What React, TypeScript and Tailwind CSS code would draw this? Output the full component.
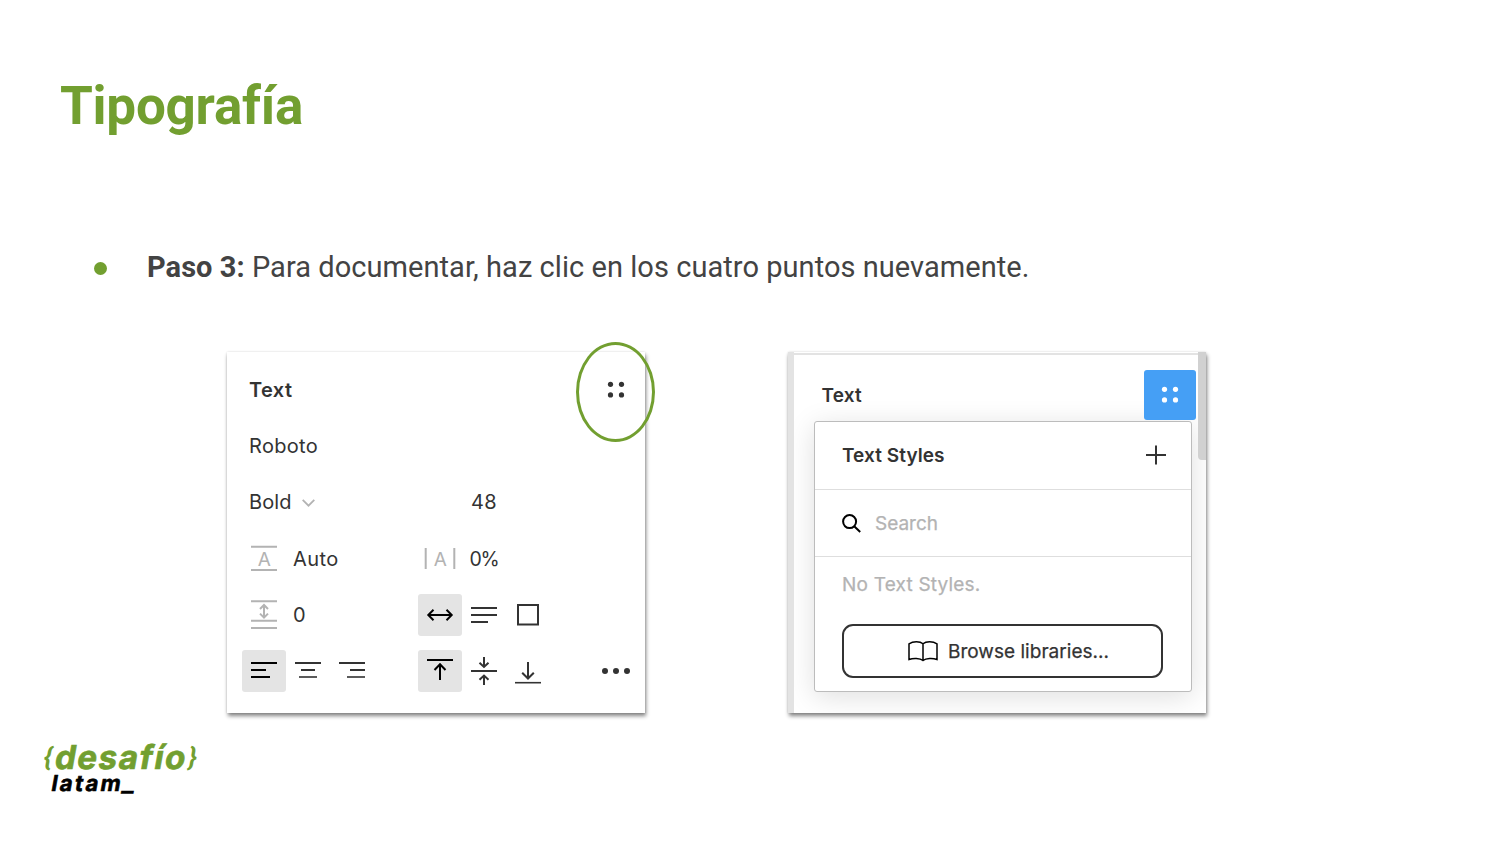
import type { ReactNode } from 'react';

function Glyph({ children, className = '' }: { children: ReactNode; className?: string }) {
  return (
    <svg
      viewBox="-22 -21 44 42"
      className={`h-[42px] w-[44px] shrink-0 ${className}`}
      fill="none"
      stroke="currentColor"
      strokeWidth="2"
    >
      {children}
    </svg>
  );
}

function FourDots({ className = '' }: { className?: string }) {
  return (
    <Glyph className={className}>
      <g fill="currentColor" stroke="none">
        <circle cx="-5.5" cy="-5.7" r="2.6" />
        <circle cx="5.5" cy="-5.7" r="2.6" />
        <circle cx="-5.5" cy="4.9" r="2.6" />
        <circle cx="5.5" cy="4.9" r="2.6" />
      </g>
    </Glyph>
  );
}

const row = 'grid grid-cols-[repeat(9,44px)] items-center';
const selected = 'rounded-[3px] bg-[#e4e4e4] text-black';

function TextPanel() {
  return (
    <section className="relative h-[361px] w-[418px] bg-white pl-[15px] pt-[10px] text-[20px] text-[#333] shadow-[1px_3px_4px_0_rgba(0,0,0,0.48),0_0_2px_rgba(0,0,0,0.12)]">
      <div className="grid grid-rows-[repeat(6,56.2px)] tracking-[0.4px]">
        <div className={row}>
          <h2 className="col-span-8 pl-[7px] font-semibold tracking-[0.4px]">Text</h2>
          <FourDots />
        </div>
        <div className={row}>
          <span className="col-span-9 pl-[7px] tracking-[0.3px]">Roboto</span>
        </div>
        <div className={row}>
          <div className="col-span-5 flex items-center gap-[10px] pl-[7px]">
            <span className="tracking-[0.1px]">Bold</span>
            <svg viewBox="0 0 13 8" className="mt-[2px] h-2 w-[13px] text-[#b3b3b3]" fill="none" stroke="currentColor" strokeWidth="1.8">
              <path d="M.7.9 6.5 6.7 12.3.9" />
            </svg>
          </div>
          <span className="pl-[9px]">48</span>
        </div>
        <div className={row}>
          <Glyph className="text-[#b3b3b3]">
            <path d="M-13-12.3H13M-13 11H13" />
            <text x="0.2" y="6.7" textAnchor="middle" fontSize="19" letterSpacing="0" fill="currentColor" stroke="none">A</text>
          </Glyph>
          <span className="col-span-3 pl-[7px] tracking-[0.4px]">Auto</span>
          <Glyph className="text-[#b3b3b3]">
            <path d="M-14.3-11V10M14.3-11V10" />
            <text x="0.2" y="6.7" textAnchor="middle" fontSize="19" letterSpacing="0" fill="currentColor" stroke="none">A</text>
          </Glyph>
          <span className="pl-[7.5px] pt-px text-[19.5px] tracking-[-1.3px]">0%</span>
        </div>
        <div className={row}>
          <Glyph className="text-[#b3b3b3]">
            <path d="M-13-13.7H13M-13 5.7H13M-13 13H13M0-10V2.6M-4-6 0-10 4-6M-4-1.4 0 2.6 4-1.4" />
          </Glyph>
          <span className="col-span-3 pl-[7px]">0</span>
          <Glyph className={selected}>
            <path d="M-11.5 0H11.5M-6.5-5.2-11.7 0-6.5 5.2M6.5-5.2 11.7 0 6.5 5.2" />
          </Glyph>
          <Glyph>
            <path d="M-13-7H13M-13 0H13M-13 7H4" />
          </Glyph>
          <Glyph>
            <rect x="-10" y="-10" width="20" height="19.5" />
          </Glyph>
        </div>
        <div className={row}>
          <Glyph className={selected}>
            <path d="M-13-8H13M-13-1H2M-13 6H6" />
          </Glyph>
          <Glyph>
            <path d="M-13-8H13M-7-1H7" />
            <path d="M-9 6H9" strokeWidth="1.6" />
          </Glyph>
          <Glyph>
            <path d="M-13-8H13M-2-1H13" />
            <path d="M-5 6H13" strokeWidth="1.6" />
          </Glyph>
          <span />
          <Glyph className={selected}>
            <path d="M-13-11H13M0-6.5V9M-5.5-1 0-6.7 5.5-1" />
          </Glyph>
          <Glyph>
            <path d="M-13 0H13M0-14V-4.5M-4.5-8.2 0-4 4.5-8.2M0 14V5M-4.5 8.7 0 4.5 4.5 8.7" />
          </Glyph>
          <Glyph>
            <path d="M0-9V7M-5.8 1.7 0 7.5 5.8 1.7" />
            <path d="M-13 11.7H13" strokeWidth="1.6" />
          </Glyph>
          <span />
          <Glyph>
            <g fill="currentColor" stroke="none">
              <circle cx="-11" cy="0" r="3" />
              <circle cx="0" cy="0" r="3" />
              <circle cx="11" cy="0" r="3" />
            </g>
          </Glyph>
        </div>
      </div>
      <span className="absolute left-[349px] top-[-10px] h-[100px] w-[79px] rounded-[50%] border-[3px] border-[#729f30]" />
    </section>
  );
}

function StylesPanel() {
  return (
    <section className="relative flex h-[361px] w-[418px] bg-white text-[19px] text-[#333] shadow-[1px_3px_4px_0_rgba(0,0,0,0.48),0_0_2px_rgba(0,0,0,0.12)]">
      <div className="w-[6px] shrink-0 bg-[#e3e3e3]" />
      <div className="flex-1 overflow-hidden pl-5 pt-px">
        <div className="-ml-5 h-[2px] bg-[#e3e3e3]" />
        <header className="mt-[15px] flex h-[50px] items-center justify-between pl-[7.5px]">
          <h2 className="pt-[2px] font-semibold tracking-[0.2px]">Text</h2>
          <div className="mr-[10px] grid h-[50px] w-[52px] place-items-center rounded-[3px] bg-[#459ff5] text-white">
            <FourDots />
          </div>
        </header>
        <div className="mt-px h-[271px] w-[378px] rounded-[3px] border border-[#bcbcbc] bg-white shadow-[0_5px_28px_rgba(0,0,0,0.13)]">
          <div className="flex h-[68px] items-center justify-between border-b border-[#dedede] pl-[27px] pr-[25px]">
            <h3 className="pt-[2px] font-semibold tracking-[0.06px]">Text Styles</h3>
            <svg viewBox="0 0 20 20" className="mb-[2px] size-5" stroke="currentColor" strokeWidth="2">
              <path d="M0 10H20M10 .5V19.5" />
            </svg>
          </div>
          <div className="flex h-[67px] items-center gap-[14px] border-b border-[#dedede] pl-[27px]">
            <svg viewBox="0 0 19 19" className="size-[19px] text-black" fill="none" stroke="currentColor" strokeWidth="2">
              <circle cx="7.6" cy="7.6" r="6.5" />
              <path d="m12.2 12.2 6 5.8" />
            </svg>
            <span className="pt-[3px] text-[#b3b3b3] [-webkit-text-stroke:0.25px_#b3b3b3]">Search</span>
          </div>
          <p className="pl-[27px] pt-[13px] leading-[29px] tracking-[0.2px] text-[#b3b3b3] [-webkit-text-stroke:0.25px_#b3b3b3]">No Text Styles.</p>
          <button className="ml-[27px] mt-[25px] flex h-[54px] w-[321px] items-center justify-center gap-[10px] rounded-[11px] border-2 border-[#333] pl-3">
            <svg viewBox="0 0 30 21" className="h-[21px] w-[30px] text-black" fill="none" stroke="currentColor" strokeWidth="1.5">
              <path d="M15 2.8C12 .2 5 .2 1 2.8V18.5C5 17 12 17 15 19.5 18 17 25 17 29 18.5V2.8C25 .2 18 .2 15 2.8ZM15 2.8V19.5" />
            </svg>
            <span className="pt-[2px] tracking-[0.03px] [-webkit-text-stroke:0.25px_#333]">Browse libraries...</span>
          </button>
        </div>
      </div>
      <span className="absolute right-0 top-0 h-[108px] w-2 rounded-bl-[4px] bg-[#d1d1d1]" />
    </section>
  );
}

function Logo() {
  return (
    <footer className="ml-[44px] mt-[29px] w-[160px] font-bold">
      <div className="flex h-[30px] -skew-x-[10deg] items-center text-[#729f30]">
        <span className="mr-[3px] font-['Roboto',sans-serif] text-[26px] leading-[30px]">{'{'}</span>
        <span className="w-[133px] whitespace-nowrap text-[33px] leading-[30px] tracking-[1.6px] [-webkit-text-stroke:0.7px_#729f30]">desafío</span>
        <span className="font-['Roboto',sans-serif] text-[26px] leading-[30px]">{'}'}</span>
      </div>
      <div className="ml-[8px] -skew-x-[10deg] text-[22px] leading-[22px] tracking-[2.3px] text-black [-webkit-text-stroke:0.6px_#000]">
        latam<span className="inline-block origin-left scale-x-115">_</span>
      </div>
    </footer>
  );
}

export default function App() {
  return (
    <main className="h-[844px] w-[1500px] overflow-hidden bg-white font-['Inter',sans-serif]">
      <h1 className="ml-[60px] pt-[75px] font-['Roboto',sans-serif] text-[53px] font-bold leading-[62px] tracking-[-0.25px] text-[#729f30]">
        Tipografía
      </h1>
      <ul className="mt-[112px] font-['Roboto',sans-serif] text-[29px] leading-[36px] text-[#434343]">
        <li className="flex items-center pl-[94px]">
          <span className="mr-[40px] mt-[3px] size-[13px] rounded-full bg-[#729f30]" />
          <p className="tracking-[0.05px]">
            <b>Paso 3:</b> Para documentar, haz clic en los cuatro puntos nuevamente.
          </p>
        </li>
      </ul>
      <div className="ml-[227px] mt-[67px] flex gap-[143px]">
        <TextPanel />
        <StylesPanel />
      </div>
      <Logo />
    </main>
  );
}
